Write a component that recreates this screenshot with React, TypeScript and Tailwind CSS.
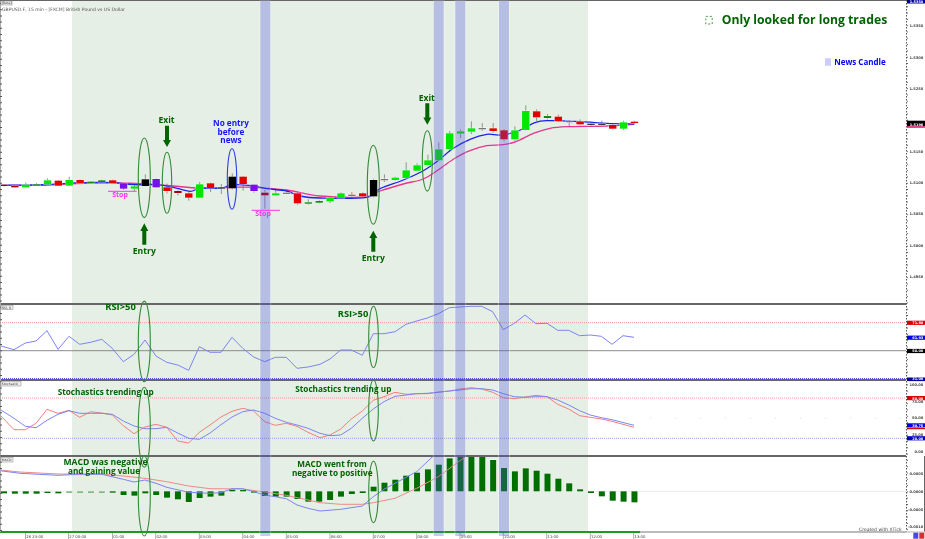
import React from "react";

const X = (i: number) => 4 + 10.87 * i;
const FONT = "'DejaVu Sans', Verdana, sans-serif";
const NOTE_FONT = "'Open Sans', 'Noto Sans', sans-serif";

type C = [number, number, number, number, string];
const G = "#00e800", R = "#e20000", P = "#7a10e8", K = "#000000", D = "#128a12", E = "#a80000";
const c1: C[] = [
  [224, 228, 222, 230, E], [228, 232, 226, 233, E], [224, 232, 218, 233, G], [223, 226, 219, 228, D], [211, 223, 205, 224, G],
  [212, 227, 210, 228, R], [210, 227, 200, 228, G], [210, 219, 208, 220, R], [215, 219, 213, 220, D], [211, 216, 209, 218, D],
  [211, 219, 209, 220, R], [220, 236, 218, 240, P], [229, 236, 225, 243, G], [208, 228, 193, 229, K], [207, 232, 205, 234, P],
  [232, 243, 221, 250, R], [243, 249, 240, 256, E], [250, 263, 245, 272, R], [223, 263, 216, 264, G], [220, 234, 218, 246, R],
  [232, 235, 222, 252, "#333333"], [200, 235, 190, 238, K], [200, 222, 198, 242, R], [224, 243, 222, 248, P], [248, 256, 240, 296, E],
  [250, 256, 240, 258, G], [248, 250, 238, 252, "#777777"], [250, 280, 247, 284, R], [277, 281, 268, 284, D],
];
const c2: C[] = [
  [363, 368, 360, 370, D], [354, 364, 350, 369, G], [340, 354, 337, 355, G], [344, 347, 336, 354, "#777777"], [340, 349, 337, 351, R],
  [300, 349, 296, 352, K], [297, 300, 283, 306, "#777777"], [293, 300, 290, 302, G], [271, 294, 247, 296, G], [256, 272, 250, 274, G],
  [241, 255, 224, 256, G], [208, 241, 187, 243, G], [160, 207, 153, 215, G], [154, 161, 148, 174, G], [145, 155, 124, 162, G],
  [144, 146, 129, 153, "#777777"], [145, 153, 129, 158, R], [151, 178, 147, 184, R], [151, 178, 139, 182, G], [93, 150, 76, 152, G],
  [94, 112, 88, 123, R], [108, 114, 102, 118, D], [110, 123, 104, 126, R], [123, 125, 120, 138, "#777777"], [125, 133, 118, 136, R],
  [131, 134, 128, 138, "#333333"], [131, 134, 122, 138, "#333333"], [135, 146, 130, 148, R], [127, 146, 122, 150, G], [125, 129, 122, 134, R],
];
const candles = [
  ...c1.map((c) => [110 + c[0] / 3, 110 + c[1] / 3, 110 + c[2] / 3, 110 + c[3] / 3, c[4]] as C),
  ...c2.map((c) => [80 + c[0] / 3, 80 + c[1] / 3, 80 + c[2] / 3, 80 + c[3] / 3, c[4]] as C),
];

type P2 = [number, number];
const left = (p: number[][], oy: number): P2[] => p.map(([x, y]) => [x / 3, oy + y / 3]);
const right = (p: number[][], oy: number): P2[] => p.map(([x, y]) => [320 + x / 3, oy + y / 3]);
const poly = (p: P2[]) => p.map(([x, y]) => `${x.toFixed(1)},${y.toFixed(1)}`).join(" ");
const smooth = (p: P2[]) => {
  let d = `M${p[0][0].toFixed(1)} ${p[0][1].toFixed(1)}`;
  for (let i = 0; i < p.length - 1; i++) {
    const a = p[Math.max(i - 1, 0)], b = p[i], c = p[i + 1], e = p[Math.min(i + 2, p.length - 1)];
    d += `C${(b[0] + (c[0] - a[0]) / 6).toFixed(1)} ${(b[1] + (c[1] - a[1]) / 6).toFixed(1)} ${(c[0] - (e[0] - b[0]) / 6).toFixed(1)} ${(c[1] - (e[1] - b[1]) / 6).toFixed(1)} ${c[0].toFixed(1)} ${c[1].toFixed(1)}`;
  }
  return d;
};

const maBlue = [
  ...left([[0,226],[130,224],[250,218],[340,218],[400,224],[470,224],[520,232],[570,244],[600,235],[660,235],[700,224],[760,228],[800,236],[860,243],[900,258]], 110),
  ...right([[0,354],[140,352],[180,326],[250,300],[310,272],[350,245],[400,205],[450,178],[500,163],[540,165],[590,155],[640,130],[680,122],[780,125],[860,130],[942,132]], 80),
];
const maPink = [
  ...left([[0,226],[130,226],[250,220],[340,219],[440,222],[520,228],[600,234],[700,232],[760,232],[860,240]], 110),
  ...right([[0,348],[140,350],[180,333],[250,312],[310,297],[350,273],[400,238],[450,212],[500,197],[550,194],[590,184],[640,160],[690,145],[740,140],[860,138],[942,133]], 80),
];
const rsi = [
  ...left([[0,152],[42,164],[76,144],[108,138],[141,107],[174,163],[207,124],[239,148],[272,142],[305,133],[337,160],[370,200],[402,178],[435,135],[468,183],[500,202],[533,210],[566,226],[598,155],[630,172],[663,172],[696,127],[728,160],[761,186],[794,200],[826,187],[859,187],[891,220],[924,216]], 295),
  ...right([[0,208],[30,192],[62,165],[94,165],[127,181],[160,116],[192,116],[225,110],[258,88],[290,78],[322,69],[355,56],[388,38],[420,36],[453,34],[485,34],[518,50],[550,104],[583,85],[615,60],[648,86],[681,85],[713,106],[746,106],[779,122],[811,120],[844,124],[876,148],[909,122],[942,127]], 295),
];
const stBlue = [
  ...left([[0,343],[42,370],[76,394],[108,398],[141,376],[174,358],[207,347],[239,355],[272,355],[305,355],[337,358],[370,378],[402,393],[435,401],[468,401],[500,397],[533,414],[566,430],[598,433],[630,414],[663,389],[696,366],[728,350],[761,345],[794,355],[826,370],[859,382],[891,390],[924,400]], 295),
  ...right([[0,415],[30,422],[62,420],[94,400],[127,370],[160,342],[192,320],[225,304],[258,300],[290,296],[322,295],[355,292],[388,288],[420,285],[453,281],[485,281],[518,285],[550,296],[583,305],[615,307],[648,305],[681,305],[713,315],[746,330],[779,347],[811,360],[844,368],[876,374],[942,391]], 295),
];
const stRed = [
  ...left([[0,360],[42,404],[76,404],[108,385],[141,343],[174,355],[207,346],[239,367],[272,350],[305,354],[337,360],[370,392],[402,416],[435,396],[468,388],[500,397],[533,438],[566,444],[598,412],[630,390],[663,366],[696,349],[728,340],[761,348],[794,380],[826,391],[859,385],[891,394],[924,412]], 295),
  ...right([[0,428],[30,420],[62,402],[94,372],[127,348],[160,316],[192,305],[225,292],[258,298],[290,296],[322,296],[355,291],[388,288],[420,282],[453,278],[485,282],[518,292],[550,308],[583,311],[615,306],[648,301],[681,305],[713,328],[746,342],[779,362],[811,367],[844,372],[876,379],[942,397]], 295),
];
const mdBlue = [
  ...left([[0,62],[60,70],[174,76],[239,73],[305,73],[370,88],[402,96],[435,90],[468,100],[500,112],[566,127],[630,130],[663,128],[696,116],[728,116],[761,125],[794,135],[826,140],[859,146],[891,165],[924,175]], 450),
  ...right([[0,183],[62,178],[127,168],[160,140],[192,118],[258,82],[290,65],[340,18]], 450),
];
const mdRed = [
  ...left([[0,60],[60,66],[174,72],[305,72],[370,78],[435,85],[500,95],[566,108],[630,116],[728,117],[794,126],[859,136],[924,150]], 450),
  ...right([[0,158],[62,163],[127,163],[160,158],[225,145],[290,115],[355,80],[420,32],[445,14]], 450),
];
const hist: [number, number][] = [
  [124,130],[124,131],[124,131],[124,131],[125,129],[125,130],[125,127],[125,127],[125,127],[125,127],[124,128],[124,135],[124,137],[124,130],[124,135],[124,143],[124,148],[124,156],[124,144],[124,140],[124,137],[119,124],[120,124],[124,128],[124,138],[124,140],[124,140],[124,147],[124,155],
  [124,155],[124,150],[124,140],[124,132],[124,129],[110,124],[98,124],[89,124],[77,124],[68,124],[58,124],[44,124],[25,124],[18,124],[17,124],[18,124],[30,124],[54,124],[64,124],[55,124],[62,124],[71,124],[86,124],[100,124],[118,124],[124,129],[124,139],[124,152],[124,155],[124,157],
];

const bands = [260.3, 433.7, 455.3, 499];
const tickX = [25.5, 68.5, 112.5, 155.7, 199.3, 242.7, 286.3, 330, 373.3, 416.7, 460, 503.3, 546.7, 590.3, 633.7];
const tickT = ["26 23:00","27 00:00","01:00","02:00","03:00","04:00","05:00","06:00","07:00","08:00","09:00","10:00","11:00","12:00","13:00"];

const plain: [number, string][] = [[26,"1.5350"],[57.3,"1.5300"],[88.7,"1.5250"],[151.3,"1.5150"],[183,"1.5100"],[214,"1.5050"],[246,"1.5000"],[277,"1.4950"],[385,"100.00"],[402,"75.00"],[418,"50.00"],[434.7,"25.00"],[451.7,"0.00"],[473.3,"0.0005"],[491.3,"0.0000"],[509.3,"-0.0005"],[527,"-0.0010"]];
const tags: [number, number, string, string][] = [[0,3.5,"#0000a0","1.5350"],[120.7,5.5,"#000000","1.5196"],[126.2,1.6,"#e0207a",""],[320.7,4.2,"#d80000","71.80"],[335.6,4.2,"#0000f0","61.93"],[348.9,4.2,"#000000","50.00"],[377.5,3.6,"#0000a0","31.00"],[396,4.2,"#d80000","80.00"],[423.3,4,"#0000f0","30.75"],[427.6,1.6,"#d80000",""],[436.2,4.2,"#0000c0","20.00"]];

const ell: [number, number, number, number, string][] = [
  [144.3,177.8,6,39.8,"#358a3a"],[167,182.8,4.7,30.5,"#358a3a"],[232,179,4.7,30.3,"#2f3fe6"],[373.3,184.8,6,39.5,"#358a3a"],[427.3,160.9,5,30.2,"#358a3a"],
  [144.3,341.4,6,40.3,"#358a3a"],[373.5,337,4.8,30.7,"#358a3a"],
  [144.3,427.3,6,40,"#358a3a"],[373.5,410.5,4.8,30.5,"#358a3a"],
  [144.3,496,6,40,"#358a3a"],[373.5,492,4.8,30.7,"#358a3a"],
];

const DG = "#006400";
const notes: [number, number, number, string, string][] = [
  [166.5,120,8.6,DG,"Exit"],[231,123.3,8.2,"#1414ff","No entry"],[231,131.8,8.2,"#1414ff","before"],[231,140.3,8.2,"#1414ff","news"],
  [120,194.7,7,"#ff33ee","Stop"],[263,213.7,7,"#ff33ee","Stop"],[144.3,250.7,8.6,DG,"Entry"],[373.3,258,8.6,DG,"Entry"],[426.7,97.7,8.6,DG,"Exit"],
  [804.5,20,12.2,DG,"Only looked for long trades"],[860,62,8,"#0000ff","News Candle"],
  [120.5,306.7,9.4,DG,"RSI>50"],[353,314,9.4,DG,"RSI>50"],
  [105.7,392.3,8.2,DG,"Stochastics trending up"],[343.3,389.3,8.2,DG,"Stochastics trending up"],
  [105.5,461.7,8.6,DG,"MACD was negative"],[104,470.7,8.2,DG,"and gaining value"],[332,464,8.2,DG,"MACD went from"],[332.2,473,8.2,DG,"negative to positive"],
];
const boxes: [number, number, number, number, string][] = [[1,1,11,4,"[Beta]"],[1,305.5,12,4,"RSI, 9"],[1,381.5,20,4.5,"Stochastic"],[1,457.5,12,4.5,"MACD"]];

export default function App() {
  return (
    <div className="relative flex h-[539px] w-[925px] overflow-hidden bg-white blur-[0.4px]" style={{ fontFamily: FONT }}>
      <div className="relative flex h-[539px] w-[906px] flex-col border-t border-[#666666]">
        <div className="absolute left-[72px] top-0 h-[531px] w-[516px] bg-[#e5efe5]" />

        <div className="relative h-[304px] border-b-2 border-[#666666]">
          <svg width="906" height="302" viewBox="0 1 906 302" className="block">
            {candles.map((c, i) => (
              <line key={i} x1={X(i)} x2={X(i)} y1={c[2]} y2={c[3]} stroke="#8a8a8a" strokeWidth="0.9" />
            ))}
            <path d={smooth(maPink)} fill="none" stroke="#e8358e" strokeWidth="1.3" />
            <path d={smooth(maBlue)} fill="none" stroke="#1c22ee" strokeWidth="1.3" />
            {candles.map((c, i) => (
              <g key={i}>
                <rect x={X(i) - 4.2} width="8.4" y={c[0] - 0.6} height={Math.max(c[1] - c[0], 1.3) + 1.2} fill="#ffffff" fillOpacity="0.55" />
                <rect x={X(i) - 3.7} width="7.4" y={c[0]} height={Math.max(c[1] - c[0], 1.3)} fill={c[4]} />
              </g>
            ))}
          </svg>
        </div>

        <div className="relative h-[76px] border-b-2 border-[#666666]">
          <svg width="906" height="74" viewBox="0 305 906 74" className="block">
            <line x1="0" x2="906" y1="322.7" y2="322.7" stroke="#f59090" strokeDasharray="1 1" />
            <line x1="0" x2="906" y1="350.7" y2="350.7" stroke="#8a8a8a" />
            <line x1="0" x2="906" y1="378.5" y2="378.5" stroke="#5050e8" strokeDasharray="1 1" />
            <polyline points={poly(rsi)} fill="none" stroke="#7d84f2" strokeWidth="1" />
          </svg>
        </div>

        <div className="relative h-[76px] border-b-2 border-[#666666]">
          <svg width="906" height="74" viewBox="0 381 906 74" className="block">
            <line x1="0" x2="906" y1="398" y2="398" stroke="#f59a9a" strokeDasharray="1 1" />
            <line x1="0" x2="906" y1="418" y2="418" stroke="#dddddd" strokeDasharray="1 24" />
            <line x1="0" x2="906" y1="438.3" y2="438.3" stroke="#9a9af0" strokeDasharray="1 1" />
            <polyline points={poly(stRed)} fill="none" stroke="#ee8080" strokeWidth="1" />
            <polyline points={poly(stBlue)} fill="none" stroke="#7d84f2" strokeWidth="1" />
          </svg>
        </div>

        <div className="relative h-[74px]">
          <svg width="906" height="74" viewBox="0 457 906 74" className="block">
            <line x1="0" x2="906" y1="491.3" y2="491.3" stroke="#ebebeb" />
            {hist.map((h, i) => (
              <g key={i}>
                <rect x={X(i) - 3.5} width="7" y={450 + h[0] / 3 - 0.5} height={Math.max((h[1] - h[0]) / 3, 0.8) + 1} fill="#ffffff" fillOpacity="0.5" />
                <rect x={X(i) - 3} width="6" y={450 + h[0] / 3} height={Math.max((h[1] - h[0]) / 3, 0.8)} fill="#006f00" />
              </g>
            ))}
            <polyline points={poly(mdRed)} fill="none" stroke="#ee8a8a" strokeWidth="1" />
            <polyline points={poly(mdBlue)} fill="none" stroke="#7d84f2" strokeWidth="1" />
          </svg>
        </div>

        <div className="relative flex h-[2px]">
          <div className="h-full w-[640px] bg-[#1f9a1f]" />
          <div className="h-full flex-1 bg-[#bbbbbb]" />
        </div>

        <div className="relative h-[6px]">
          <svg width="906" height="6" viewBox="0 533 906 6" className="block">
            {tickX.map((x) => (
              <line key={x} x1={x} x2={x} y1="533" y2="539" stroke="#777777" strokeWidth="0.6" />
            ))}
            {tickT.map((t, i) => (
              <text key={t} x={tickX[i] + 0.8} y="537.6" fontSize="3.8" fill="#444444" fontFamily={FONT}>{t}</text>
            ))}
          </svg>
        </div>
      </div>

      <svg width="19" height="539" viewBox="906 0 19 539" className="block flex-none">
        <line x1="906" x2="925" y1="0.5" y2="0.5" stroke="#666666" />
        <line x1="906.5" x2="906.5" y1="0" y2="532" stroke="#555555" strokeDasharray="1.5 1.5" />
        <line x1="907.5" x2="907.5" y1="0" y2="532" stroke="#666666" strokeDasharray="1 5.3" />
        <line x1="924.5" x2="924.5" y1="456" y2="532" stroke="#666666" />
        <line x1="906" x2="925" y1="532" y2="532" stroke="#cccccc" strokeWidth="1.5" />
        {plain.map(([y, t]) => (
          <text key={y} x="923.3" y={y + 1.4} textAnchor="end" fontSize="3.6" fontWeight="700" fill="#444444" fontFamily={FONT}>{t}</text>
        ))}
        {tags.map(([y, h, col, t]) => (
          <g key={y}>
            <rect x="907" y={y} width="18" height={h} fill={col} />
            {t && <text x="923.3" y={y + h - 0.7} textAnchor="end" fontSize="3.5" fontWeight="700" fill="#ffffff" fontFamily={FONT}>{t}</text>}
          </g>
        ))}
        <rect x="913.3" y="532.7" width="5" height="6" fill="#4a4ad8" />
        <rect x="919.3" y="532.7" width="5" height="6" fill="#d83030" />
      </svg>

      <svg width="925" height="539" viewBox="0 0 925 539" className="pointer-events-none absolute left-0 top-0">
        <line x1="0.5" x2="0.5" y1="1" y2="532" stroke="#aaaaaa" />
        <line x1="1" x2="1" y1="3" y2="532" stroke="#555555" strokeWidth="2" strokeDasharray="1 5.2" />
        {bands.map((x) => (
          <g key={x}>
            <rect x={x - 0.3} y="1" width="10.6" height="535" fill="none" stroke="#ffffff" strokeOpacity="0.5" strokeWidth="0.6" />
            <rect x={x} y="1" width="10" height="535" fill="#484edf" fillOpacity="0.3" />
          </g>
        ))}
        <rect x="825" y="58.3" width="6" height="7.4" fill="#ccccff" />
        <rect x="705.8" y="16.4" width="6.4" height="7.6" fill="none" stroke="#3a8a3a" strokeWidth="0.9" strokeDasharray="2 2" />
        {ell.map(([cx, cy, rx, ry, col], i) => (
          <ellipse key={i} cx={cx} cy={cy} rx={rx} ry={ry} fill="none" stroke={col} strokeWidth="1.1" />
        ))}
        <polygon points="165,125.7 169,125.7 169,140 171,140 167,147 163,140 165,140" fill={DG} />
        <polygon points="425.3,103.3 429.3,103.3 429.3,117.5 431.3,117.5 427.3,124.7 423.3,117.5 425.3,117.5" fill={DG} />
        <polygon points="142.3,244.7 146.3,244.7 146.3,231 148.3,231 144.3,223.3 140.3,231 142.3,231" fill={DG} />
        <polygon points="371.3,251.7 375.3,251.7 375.3,238 377.3,238 373.3,230.7 369.3,238 371.3,238" fill={DG} />
        <line x1="108" x2="136.7" y1="191.3" y2="191.3" stroke="#ff33ee" />
        <line x1="251.7" x2="280" y1="210.3" y2="210.3" stroke="#ff33ee" />

        {boxes.map(([x, y, w, h, t]) => (
          <g key={t}>
            <rect x={x} y={y} width={w} height={h} fill="#eeeeee" stroke="#888888" strokeWidth="0.5" />
            <text x={x + 0.8} y={y + h - 0.9} fontSize="3.2" fill="#444444" fontFamily={FONT}>{t}</text>
          </g>
        ))}
        <text x="2" y="10.8" fontSize="4.55" fill="#555555" fontFamily={FONT}>GBPUSD.F, 15 min - [FXCM] British Pound vs US Dollar</text>
        <text x="859" y="531" fontSize="4.55" fill="#444444" fontFamily={FONT}>Created with XTick</text>
        {notes.map(([x, y, s, col, t], i) => (
          <text key={i} x={x} y={y + s * 0.36} textAnchor="middle" fontSize={s} fontWeight="700" fill={col} fontFamily={NOTE_FONT}>{t}</text>
        ))}
      </svg>
    </div>
  );
}
